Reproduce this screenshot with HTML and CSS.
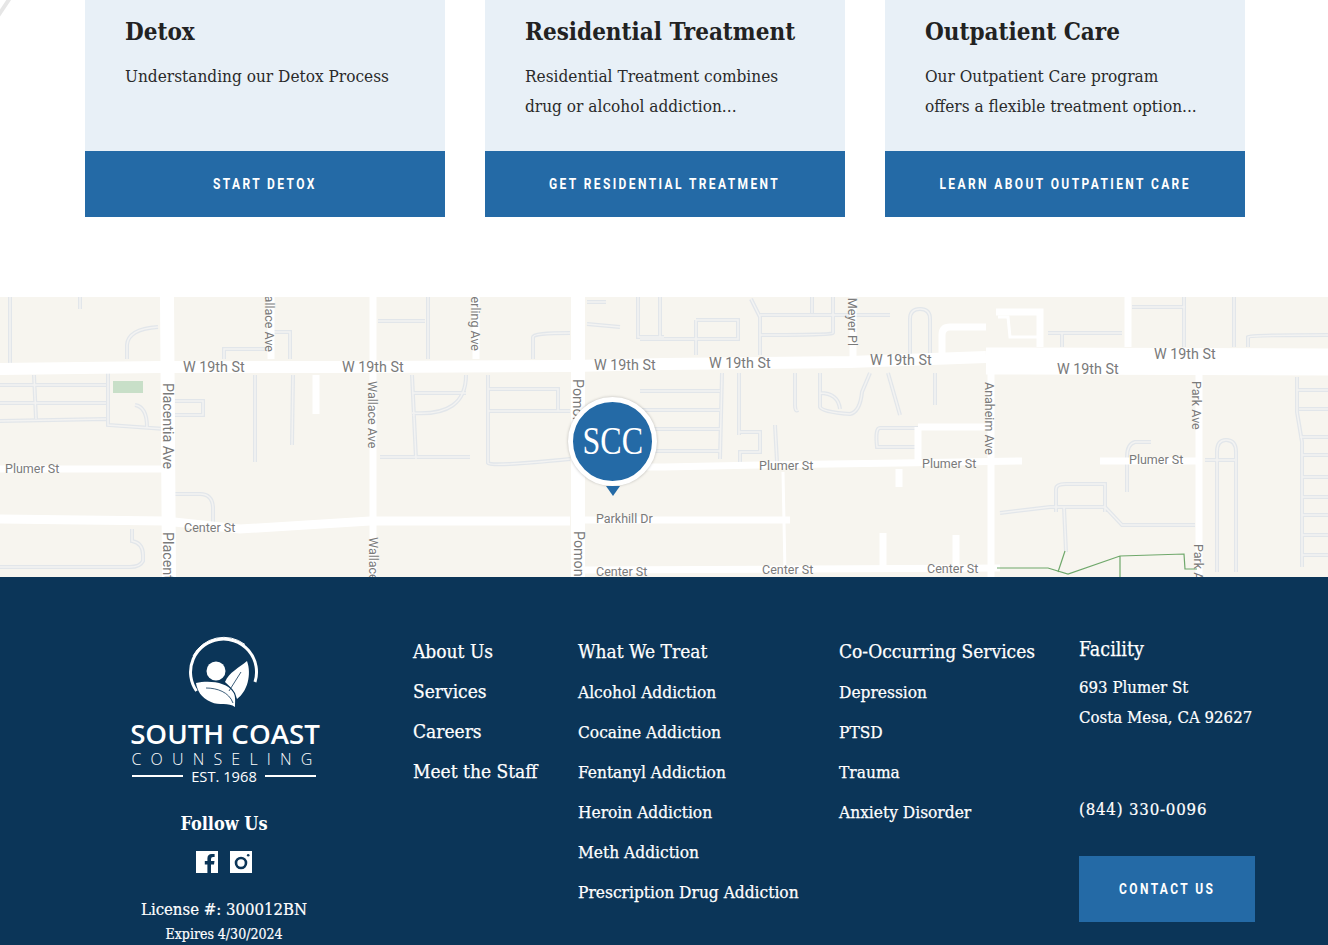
FILE: index.html
```html
<!DOCTYPE html>
<html lang="en">
<head>
	<meta charset="UTF-8">
	<title>South Coast Counseling</title>
	<link rel="stylesheet" href="styles.css">
</head>
<body>

	<svg class="corner-mark" viewBox="0 0 20 20" aria-hidden="true"><path d="M-2 16 L10 -2"/></svg>

	<section class="programs">
		<article class="program">
			<div class="program-body">
				<h3>Detox</h3>
				<p>Understanding our Detox Process</p>
			</div>
			<a class="btn" href="#"><span>START DETOX</span></a>
		</article>
		<article class="program">
			<div class="program-body">
				<h3>Residential Treatment</h3>
				<p>Residential Treatment combines<br>drug or alcohol addiction...</p>
			</div>
			<a class="btn" href="#"><span>GET RESIDENTIAL TREATMENT</span></a>
		</article>
		<article class="program">
			<div class="program-body">
				<h3>Outpatient Care</h3>
				<p>Our Outpatient Care program<br>offers a flexible treatment option...</p>
			</div>
			<a class="btn" href="#"><span>LEARN ABOUT OUTPATIENT CARE</span></a>
		</article>
	</section>

	<section class="map">
		<svg class="map-canvas" viewBox="0 0 1328 280" aria-label="Map of Costa Mesa">
			<defs>
				<g id="lanes">
					<path d="M10 0V68M80 0V12M127 62V48Q128 32 158 30M0 88H106M0 106H106M0 124L106 122M34 78L36 122M108 76V128L165 132M135 108Q147 110 147 130"/>
					<path d="M175 104H203V118H175M255 78V165M293 78L292 148M224 62V52H271M271 35H290V62"/>
					<path d="M412 78L416 162M412 96H466M412 116Q466 120 466 78M380 160H470M488 78V166Q490 170 570 162M488 92H558V114M488 114H570"/>
					<path d="M378 24H425M428 0V62M533 62V40Q533 36 570 36M587 5H606M587 27L620 30M638 0V40H664M660 0V40"/>
					<path d="M132 232V244Q143 246 143 258V264Q140 270 130 270H0M175 197H200Q212 197 213 210V226"/>
					<path d="M751 2L760 20V58M812 0V16M833 0V36Q833 38 760 38M760 18H890M696 23H738V42H640M696 23V58"/>
					<path d="M910 58V22Q910 12 920 12Q930 12 930 22V58M1048 36H1122M1062 36V50M1132 10H1185M1184 0V50M1234 0V50M1248 50V40Q1250 38 1328 38"/>
					<path d="M640 94H720M640 113H720M640 132H720M640 154H720M722 76L720 162M739 76V138M739 135H760V155H740V166M795 76V108Q795 115 798 113"/>
					<path d="M820 76V110Q822 115 850 117Q860 115 862 95L870 76M820 96Q838 96 840 112M888 76L900 118M935 76V108M775 128L777 165M918 131H880Q875 131 877 150H918"/>
					<path d="M1151 145H1135Q1127 147 1127 160V195M1056 215V192Q1056 187 1066 187H1105V215M1000 216L1050 210H1105L1122 228H1195M1064 210L1066 255"/>
					<path d="M1205 163H1235M1217 275V155Q1217 143 1226 143Q1236 143 1236 155V275M1297 80V115L1302 145V270M1297 93H1328M1299 112H1328M1300 140H1328M1302 158H1328M1302 180H1328M1302 200H1328M1302 218H1328M1302 238H1328M1302 258H1328"/>
				</g>
			</defs>

			<rect class="park" x="113" y="84" width="30" height="12"/>

			<use class="lane-edge" href="#lanes"/>
			<use class="lane-core" href="#lanes"/>

			<g class="road">
				<path class="road-19th" d="M0 72L160 70H369L572 69L664 67L850 65L986 60"/>
				<path class="road-19th-wide" d="M986 64L1328 65"/>
				<path class="road-ave" d="M167 0L169 280M578 0V280"/>
				<path class="road-center" d="M0 222L165 224L240 232L370 224H570"/>
				<path d="M373 0V280M991 60V280M1199 70V280M1128 0V50"/>
				<path d="M271 0V62M476 0V62M853 0V60"/>
				<path d="M0 172H165M585 170L664 170L760 168L900 166L1022 164M1100 164H1199"/>
				<path d="M585 223H790M585 273L1000 271"/>
				<path d="M996 15H1040V50M918 130H990M918 130V165M942 58V38Q942 30 950 30H986"/>
				<path d="M899 172V190M883 236V270M956 238V270M316 78V117"/>
				<path class="road-thin" d="M783 175L785 275M664 222H780M998 20H1008L1010 40H1040"/>
			</g>

			<path class="trail" d="M997 271H1048L1068 277L1120 259L1184 257L1185 272H1197M1058 275L1065 254M1120 259V280"/>

			<g class="street">
				<text class="big" x="183" y="75">W 19th St</text>
				<text class="big" x="342" y="75">W 19th St</text>
				<text class="big" x="594" y="73">W 19th St</text>
				<text class="big" x="709" y="71">W 19th St</text>
				<text class="big" x="870" y="68">W 19th St</text>
				<text class="big" x="1057" y="77">W 19th St</text>
				<text class="big" x="1154" y="62">W 19th St</text>
				<text x="5" y="176">Plumer St</text>
				<text x="759" y="173">Plumer St</text>
				<text x="922" y="171">Plumer St</text>
				<text x="1129" y="167">Plumer St</text>
				<text x="184" y="235">Center St</text>
				<text x="596" y="279">Center St</text>
				<text x="762" y="277">Center St</text>
				<text x="927" y="276">Center St</text>
				<text x="596" y="226">Parkhill Dr</text>
				<text class="big" transform="translate(163 86) rotate(90)">Placentia Ave</text>
				<text class="big" transform="translate(163 235) rotate(90)">Placentia Ave</text>
				<text transform="translate(368 84) rotate(90)">Wallace Ave</text>
				<text transform="translate(369 240) rotate(90)">Wallace Ave</text>
				<text class="big" transform="translate(573 82) rotate(90)">Pomona Ave</text>
				<text class="big" transform="translate(574 234) rotate(90)">Pomona Ave</text>
				<text transform="translate(985 85) rotate(90)">Anaheim Ave</text>
				<text transform="translate(1192 84) rotate(90)">Park Ave</text>
				<text transform="translate(1194 247) rotate(90)">Park Ave</text>
				<text class="end" transform="translate(265 55) rotate(90)">Wallace Ave</text>
				<text class="end" transform="translate(471 54) rotate(90)">Sterling Ave</text>
				<text class="end" transform="translate(848 49) rotate(90)">Meyer Pl</text>
			</g>
		</svg>

		<div class="pin">
			<div class="pin-head"><span>SCC</span></div>
			<div class="pin-tip"></div>
		</div>
	</section>

	<footer>
		<div class="brand">
			<svg class="logo" viewBox="0 0 90 90" aria-hidden="true">
				<path class="logo-ring" d="M17.5 61A33 33 0 1 1 76 52"/>
				<path class="logo-swoosh" d="M14 26A34.8 34.8 0 0 1 66 14.5"/>
				<circle class="logo-fill" cx="37" cy="41" r="9.5"/>
				<path class="logo-fill" d="M68 31C60 38 50 42 46 52C49 55 53 58 56 63L58 69C68 62 73 45 68 31Z"/>
				<path class="logo-fill" d="M17 53C30 50 48 52 54 62C57 66 56 72 56 77C50 72 40 76 32 72C22 68 18 60 17 53Z"/>
				<path class="logo-vein" d="M27 58C38 58 50 62 54 73M50 61L62 42"/>
			</svg>
			<div class="brand-name">SOUTH COAST</div>
			<div class="brand-sub">COUNSELING</div>
			<div class="brand-est"><span>EST. 1968</span></div>
			<h4 class="follow">Follow Us</h4>
			<div class="social">
				<svg viewBox="0 0 22 22" aria-label="Facebook"><rect class="logo-fill" width="22" height="22"/><path class="glyph" d="M15 22V13.5H18L18.5 10H15V8Q15 6 17 6H18.6V3H15.8Q11.4 3 11.4 7.6V10H8.8V13.5H11.4V22Z"/></svg>
				<svg viewBox="0 0 22 22" aria-label="Instagram"><rect class="logo-fill" width="22" height="22"/><circle class="glyph-ring" cx="11" cy="12" r="5"/><circle class="glyph" cx="18.2" cy="4.3" r="1.3"/></svg>
			</div>
			<p class="license">License #: 300012BN</p>
			<p class="expires">Expires 4/30/2024</p>
		</div>

		<ul class="links col-about">
			<li class="head"><a href="#">About Us</a></li>
			<li class="head"><a href="#">Services</a></li>
			<li class="head"><a href="#">Careers</a></li>
			<li class="head"><a href="#">Meet the Staff</a></li>
		</ul>

		<ul class="links col-treat">
			<li class="head"><a href="#">What We Treat</a></li>
			<li><a href="#">Alcohol Addiction</a></li>
			<li><a href="#">Cocaine Addiction</a></li>
			<li><a href="#">Fentanyl Addiction</a></li>
			<li><a href="#">Heroin Addiction</a></li>
			<li><a href="#">Meth Addiction</a></li>
			<li><a href="#">Prescription Drug Addiction</a></li>
		</ul>

		<ul class="links col-occur">
			<li class="head"><a href="#">Co-Occurring Services</a></li>
			<li><a href="#">Depression</a></li>
			<li><a href="#">PTSD</a></li>
			<li><a href="#">Trauma</a></li>
			<li><a href="#">Anxiety Disorder</a></li>
		</ul>

		<div class="facility">
			<h4>Facility</h4>
			<p>693 Plumer St<br>Costa Mesa, CA 92627</p>
			<p class="phone">(844) 330-0096</p>
			<a class="btn btn-contact" href="#"><span>CONTACT US</span></a>
		</div>
	</footer>

</body>
</html>
```

FILE: styles.css
```css
html, body {
	margin: 0;
	padding: 0;
	height: 945px;
	overflow: hidden;
	background-color: #fff;
}
body {
	font-family: "DejaVu Serif", "Liberation Serif", serif;
	font-stretch: condensed;
	color: #222;
	position: relative;
}
.corner-mark {
	position: absolute;
	top: 0;
	left: 0;
	width: 20px;
	height: 20px;
}
.corner-mark path {
	stroke: #e6e6e6;
	stroke-width: 4;
	fill: none;
}

/* program cards */
.programs {
	display: flex;
	gap: 40px;
	padding: 0 83px 80px 85px;
}
.program {
	width: 360px;
}
.program-body {
	height: 151px;
	box-sizing: border-box;
	padding: 14px 20px 0 40px;
	background-color: #e8f0f7;
}
.program-body h3 {
	margin: 0 0 11px;
	font-size: 24px;
	line-height: 36px;
	font-weight: bold;
	color: #222;
}
.program-body p {
	margin: 0;
	font-size: 17.1px;
	line-height: 30px;
	color: #2a2a2a;
}
.btn {
	display: flex;
	align-items: center;
	justify-content: center;
	height: 66px;
	background-color: #246aa6;
	color: #fff;
	font-family: Roboto, "Liberation Sans", sans-serif;
	font-stretch: normal;
	font-size: 15px;
	font-weight: bold;
	letter-spacing: 3px;
	text-decoration: none;
	white-space: nowrap;
}
.btn span {
	display: block;
	transform: scaleX(0.8);
}

/* map */
.map {
	position: relative;
	height: 280px;
	overflow: hidden;
	background-color: #f7f5ef;
}
.map-canvas {
	display: block;
	width: 1328px;
	height: 280px;
}
.park {
	fill: #c8dfc8;
}
.lane-edge {
	fill: none;
	stroke: #e2e6ea;
	stroke-width: 4;
}
.lane-core {
	fill: none;
	stroke: #f3f3f2;
	stroke-width: 1.5;
}
.road path {
	fill: none;
	stroke: #fff;
	stroke-width: 7;
}
.road .road-19th {
	stroke-width: 12;
}
.road .road-19th-wide {
	stroke-width: 27;
}
.road .road-ave {
	stroke-width: 14;
}
.road .road-center {
	stroke-width: 9;
}
.road .road-thin {
	stroke-width: 3;
}
.trail {
	fill: none;
	stroke: #6fa86b;
	stroke-width: 1.2;
}
.street text {
	font-family: Roboto, "Liberation Sans", sans-serif;
	font-stretch: normal;
	font-size: 12.5px;
	fill: #7a7a7a;
}
.street .big {
	font-size: 14.3px;
}
.street .end {
	text-anchor: end;
}
.pin {
	position: absolute;
	left: 568px;
	top: 100px;
	width: 89px;
}
.pin-head {
	display: flex;
	align-items: center;
	justify-content: center;
	box-sizing: border-box;
	width: 89px;
	height: 89px;
	border: 5px solid #fff;
	border-radius: 50%;
	background-color: #246aa6;
	box-shadow: 0 0 3px rgba(0, 0, 0, 0.25);
	color: #fff;
	font-family: "Liberation Serif", serif;
	font-stretch: normal;
	font-size: 40px;
}
.pin-head span {
	display: block;
	margin-top: -2px;
	transform: scaleX(0.8);
}
.pin-tip {
	width: 0;
	margin: 0 auto;
	border-left: 7px solid transparent;
	border-right: 7px solid transparent;
	border-top: 10px solid #246aa6;
}

/* footer */
footer {
	display: flex;
	height: 368px;
	box-sizing: border-box;
	padding: 60px 0 0 75px;
	background-color: #0b3558;
	color: #fff;
	overflow: hidden;
}
.brand {
	width: 298px;
	margin-right: 40px;
	text-align: center;
	flex: none;
}
.logo {
	display: block;
	width: 90px;
	height: 90px;
	margin: -7px auto 0;
}
.logo-ring {
	fill: none;
	stroke: #fff;
	stroke-width: 3;
}
.logo-swoosh {
	fill: none;
	stroke: #fff;
	stroke-width: 1;
}
.logo-fill {
	fill: #fff;
}
.logo-vein {
	fill: none;
	stroke: #0b3558;
	stroke-width: 0.8;
}
.brand-name {
	margin-top: -3px;
	padding-left: 2px;
	font-family: "Open Sans", sans-serif;
	font-stretch: normal;
	font-weight: 600;
	font-size: 27.7px;
	line-height: 32px;
}
.brand-sub {
	margin-top: 1px;
	margin-right: -5px;
	font-family: "Open Sans", sans-serif;
	font-stretch: normal;
	font-weight: 300;
	font-size: 16px;
	line-height: 18px;
	letter-spacing: 9.2px;
}
.brand-est {
	display: flex;
	align-items: center;
	justify-content: center;
	gap: 8px;
	font-family: "Open Sans", sans-serif;
	font-stretch: normal;
	font-size: 14.7px;
	line-height: 16px;
}
.brand-est::before,
.brand-est::after {
	content: '';
	width: 51px;
	height: 2px;
	background-color: #fff;
}
.follow {
	margin: 28px 0 0;
	font-size: 18px;
	line-height: 24px;
	font-weight: bold;
}
.social {
	display: flex;
	justify-content: center;
	gap: 12px;
	margin-top: 15px;
}
.social svg {
	width: 22px;
	height: 22px;
}
.glyph {
	fill: #0b3558;
}
.glyph-ring {
	fill: none;
	stroke: #0b3558;
	stroke-width: 2.6;
}
.license {
	margin: 25px 0 0;
	font-size: 16.6px;
	line-height: 24px;
	-webkit-text-stroke: 0.2px #fff;
}
.expires {
	margin: 0;
	font-size: 14px;
	line-height: 24px;
	-webkit-text-stroke: 0.2px #fff;
}
.links {
	list-style: none;
	margin: 0 40px 0 0;
	padding: 0;
	flex: none;
}
.links li {
	height: 40px;
	line-height: 30px;
	font-size: 17.2px;
	white-space: nowrap;
	-webkit-text-stroke: 0.25px #fff;
}
.links a {
	color: #fff;
	text-decoration: none;
}
.links .head {
	font-size: 19px;
	line-height: 28px;
}
.col-about {
	width: 125px;
}
.col-treat {
	width: 221px;
}
.col-occur {
	width: 200px;
}
.facility {
	width: 176px;
	padding-top: 1px;
	flex: none;
}
.facility h4 {
	margin: 0 0 10px;
	font-size: 19.5px;
	line-height: 24px;
	font-weight: normal;
	-webkit-text-stroke: 0.25px #fff;
}
.facility p {
	margin: 0;
	font-size: 16.7px;
	line-height: 30px;
	white-space: nowrap;
	-webkit-text-stroke: 0.2px #fff;
}
.facility .phone {
	margin-top: 62px;
	letter-spacing: 0.8px;
}
.btn-contact {
	margin-top: 32px;
}
```
